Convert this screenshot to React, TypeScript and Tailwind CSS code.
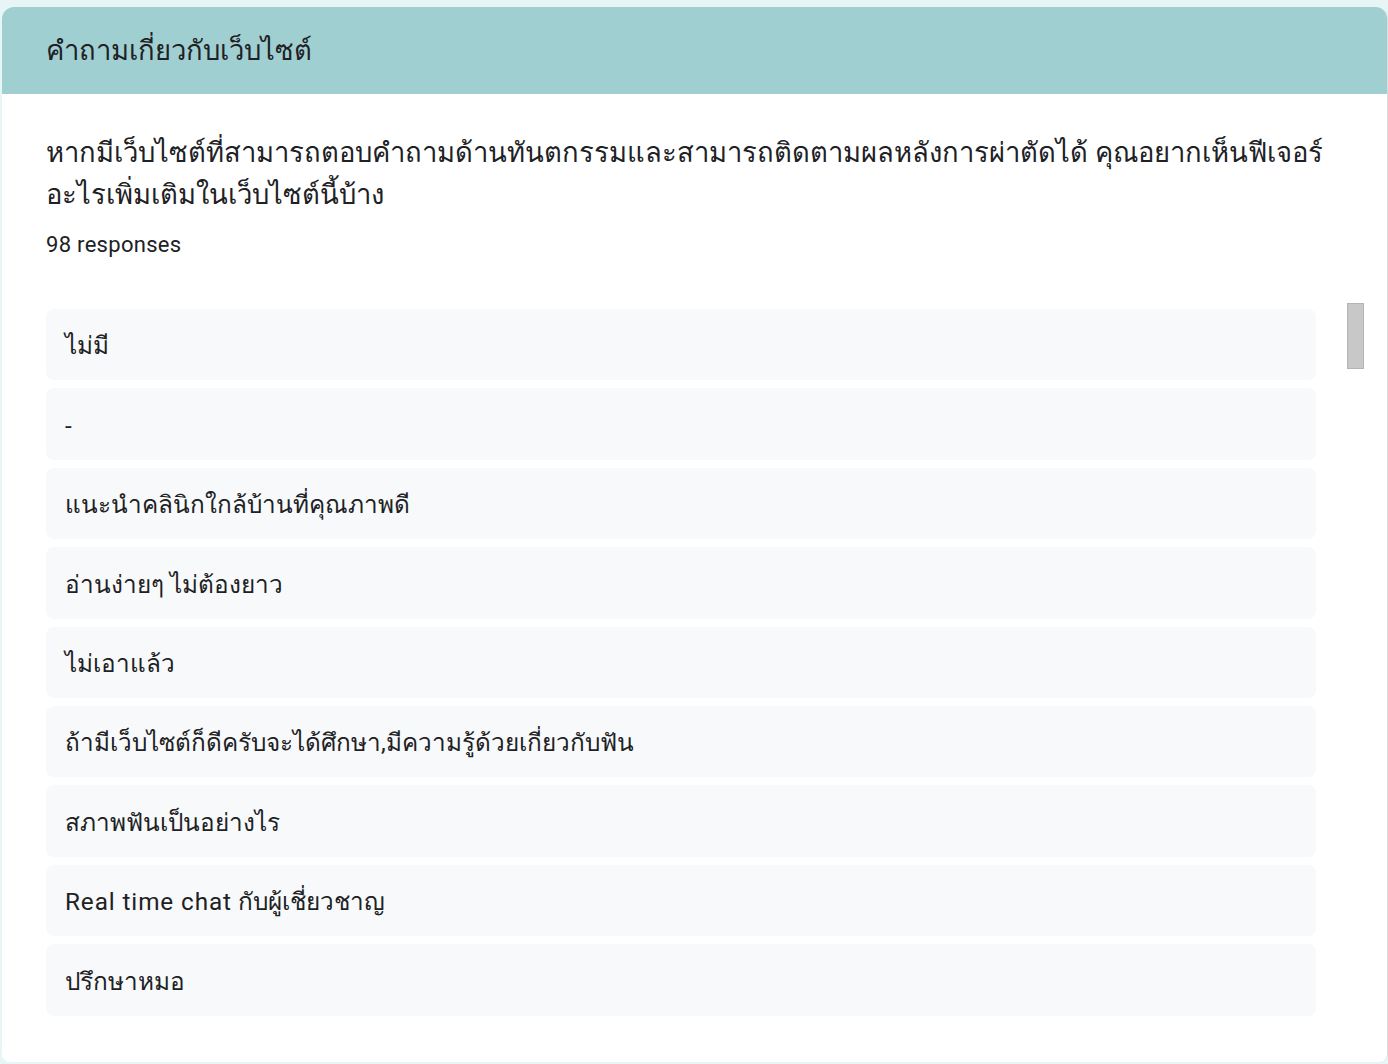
import React from "react";

const answers: React.ReactNode[] = [
  "ไม่มี",
  "-",
  "แนะนำคลินิกใกล้บ้านที่คุณภาพดี",
  "อ่านง่ายๆ ไม่ต้องยาว",
  "ไม่เอาแล้ว",
  "ถ้ามีเว็บไซต์ก็ดีครับจะได้ศึกษา,มีความรู้ด้วยเกี่ยวกับฟัน",
  "สภาพฟันเป็นอย่างไร",
  <>
    <span className="tracking-[0.9px]">Real time chat</span> กับผู้เชี่ยวชาญ
  </>,
  "ปรึกษาหมอ",
];

export default function App() {
  return (
    <div
      className="w-[1388px] h-[1064px] bg-[#e8f5f6] pl-[2px] pt-[7px] overflow-hidden text-[#202124]"
      style={{ fontFamily: 'Roboto, "Noto Sans", "DejaVu Sans", sans-serif' }}
    >
      <div className="h-[1055px] bg-white rounded-t-[12px] rounded-b-[8px] border-r border-[#dadce0] flex flex-col overflow-hidden">
        <div className="h-[87px] bg-[#a0cfd2] flex items-center pl-[44px] pt-[3px] text-[27.4px]">
          คำถามเกี่ยวกับเว็บไซต์
        </div>
        <div className="pl-[44px] pr-[22px] pt-[38px]">
          <div className="text-[27.4px] leading-[42px] pr-[20px]">
            หากมีเว็บไซต์ที่สามารถตอบคำถามด้านทันตกรรมและสามารถติดตามผลหลังการผ่าตัดได้ คุณอยากเห็นฟีเจอร์อะไรเพิ่มเติมในเว็บไซต์นี้บ้าง
          </div>
          <div className="text-[22px] tracking-[0.3px] leading-[28px] mt-[15px]">98 responses</div>
          <div className="flex mt-[44px]">
            <div className="w-[1270px] h-[740px] overflow-hidden flex flex-col gap-[8px] pt-[6px]">
              {answers.map((a, i) => (
                <div
                  key={i}
                  className="shrink-0 h-[71.4px] bg-[#f8f9fa] rounded-[8px] flex items-center pl-[19px] pt-[4px] text-[24.3px]"
                >
                  <span>{a}</span>
                </div>
              ))}
            </div>
            <div className="ml-[31px] w-[17px]">
              <div className="h-[66px] bg-[#c8c8c8] border border-[#b4b4b4]" />
            </div>
          </div>
        </div>
      </div>
    </div>
  );
}
